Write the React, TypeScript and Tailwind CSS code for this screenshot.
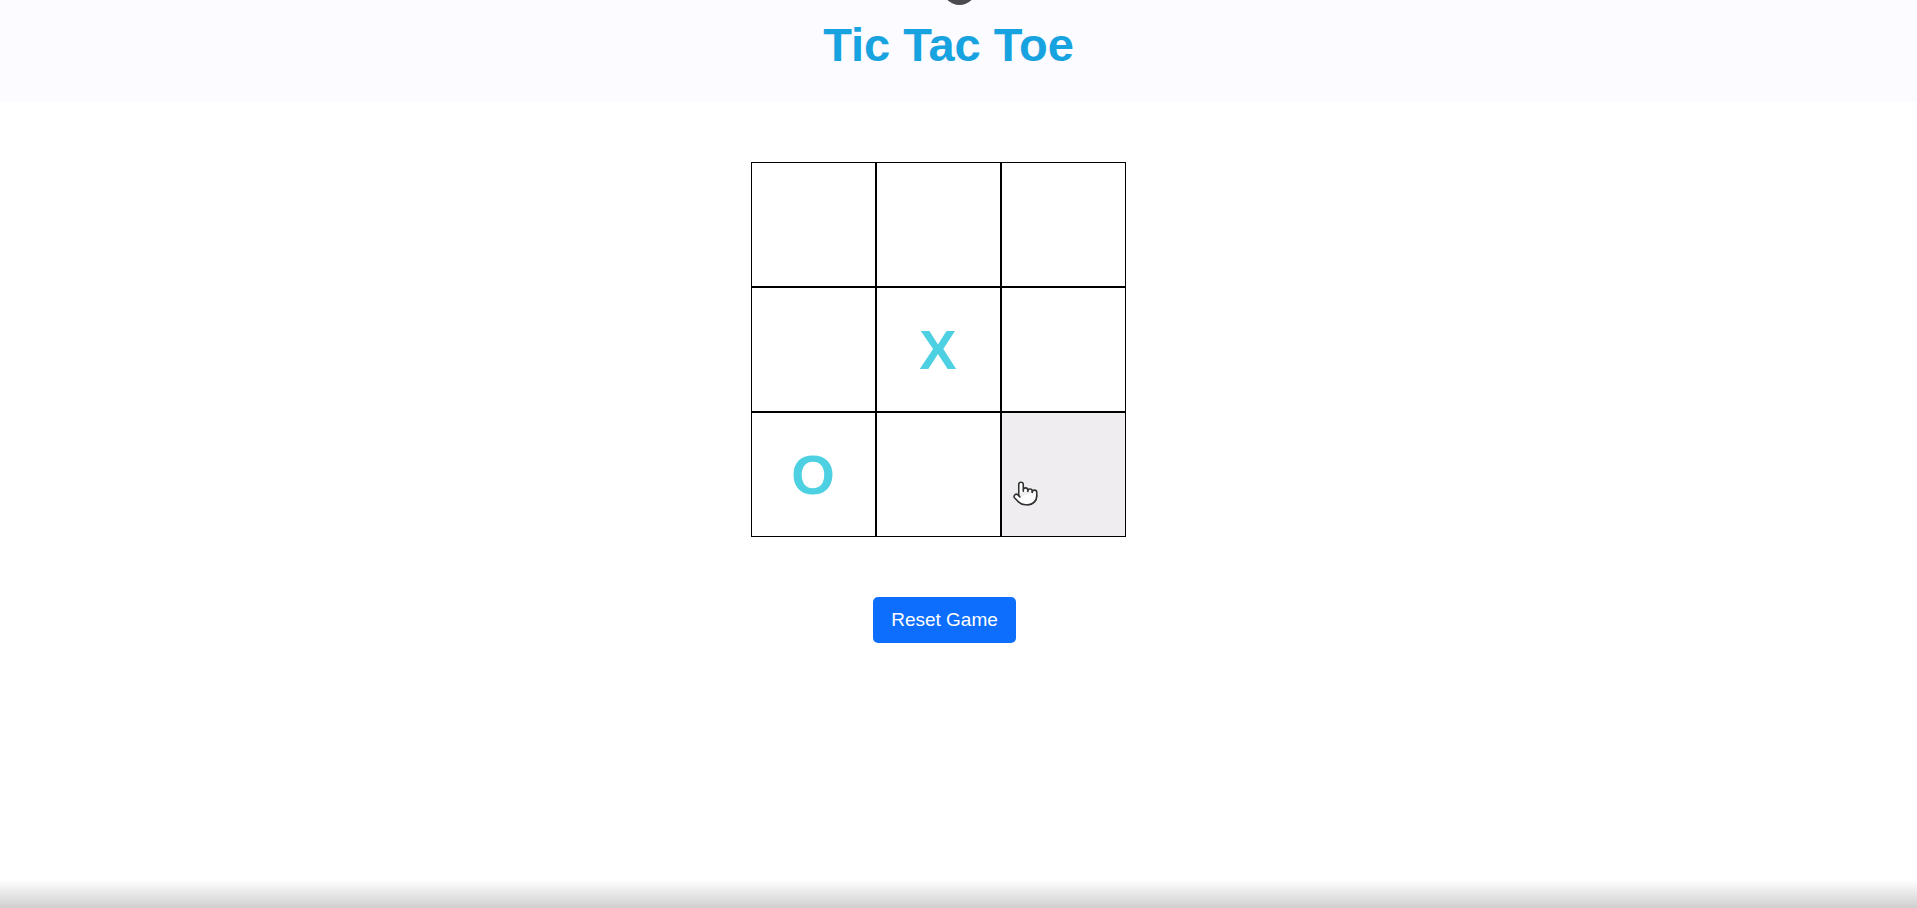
import { Pointer } from "lucide-react";

const board = ["", "", "", "", "X", "", "O", "", ""];

const Cell = ({ value, index }: { value: string; index: number }) => {
	const hovered = index === 8;
	return (
		<div
			className={`relative flex h-[125px] w-[125px] items-center justify-center border border-black ${
				hovered ? "bg-[#efedf0]" : "bg-white"
			}`}
		>
			<span className="text-[56px] leading-none font-bold text-[#4dd0e1]">{value}</span>
			{hovered && (
				<Pointer
					size={27}
					strokeWidth={1.4}
					className="absolute left-[10px] top-[67px] fill-white text-[#333]"
				/>
			)}
		</div>
	);
};

const App = () => {
	return (
		<div className="relative flex min-h-screen flex-col bg-white font-['Liberation_Sans',Arial,sans-serif]">
			<div className="absolute left-[943px] top-[-28px] h-[33px] w-[33px] rounded-full bg-[#4a4a4f]" />
			<header className="flex h-[102px] items-start justify-center bg-[#fcfbff] pt-[18px] pr-[20px]">
				<h1 className="text-[47px] leading-[54px] font-bold text-[#17a2e0]">Tic Tac Toe</h1>
			</header>
			<main className="flex flex-1 flex-col items-center pt-[60px] pr-[17px]">
				<div className="mr-[24px] grid grid-cols-3">
					{board.map((v, i) => (
						<Cell key={i} value={v} index={i} />
					))}
				</div>
				<button className="mt-[60px] mr-[11px] h-[46px] w-[143px] rounded-[5px] bg-[#0d6efd] text-[19px] text-white">
					Reset Game
				</button>
			</main>
			<div className="h-[28px] bg-gradient-to-b from-white to-[#cfcfcf]" />
		</div>
	);
};

export default App;
